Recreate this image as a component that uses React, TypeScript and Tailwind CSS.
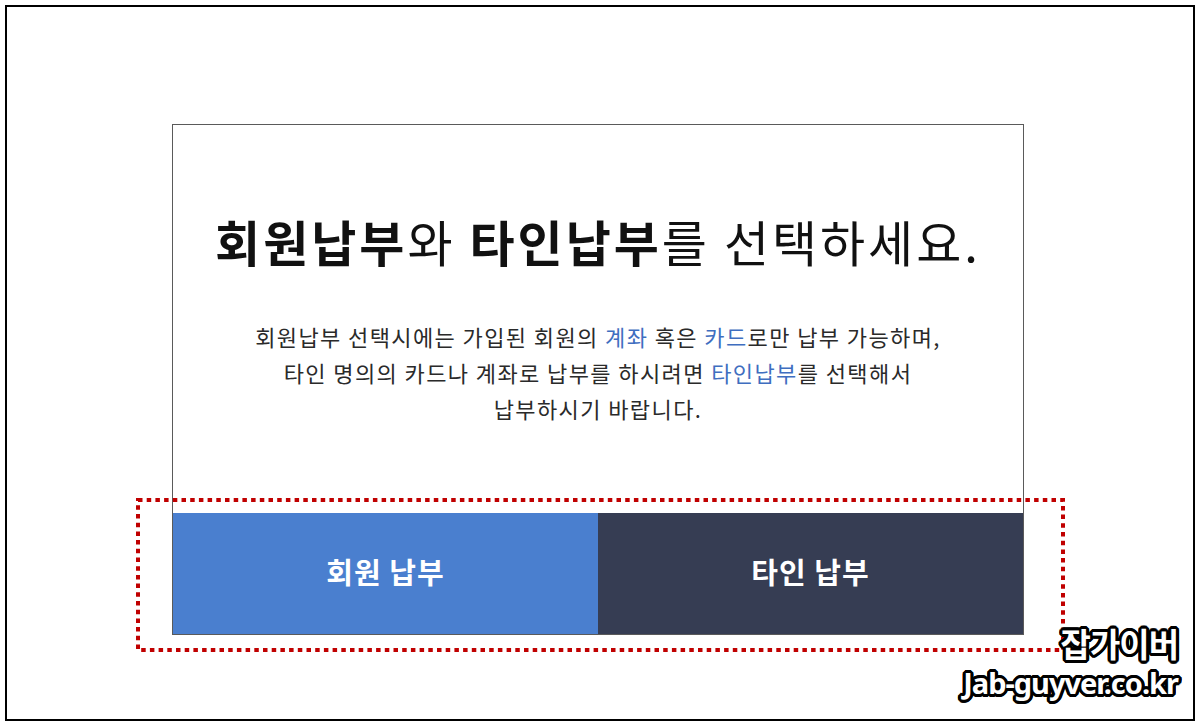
import React from "react";

const KR = "font-['Noto_Sans_CJK_KR','Noto_Sans',sans-serif]";

export default function App() {
  const outline =
    "[text-shadow:3px_0_0_#000,-3px_0_0_#000,0_3px_0_#000,0_-3px_0_#000,2px_2px_0_#000,-2px_2px_0_#000,2px_-2px_0_#000,-2px_-2px_0_#000,3px_1px_0_#000,-3px_1px_0_#000,3px_-1px_0_#000,-3px_-1px_0_#000,1px_3px_0_#000,-1px_3px_0_#000,1px_-3px_0_#000,-1px_-3px_0_#000]";
  return (
    <div className={`relative w-[1200px] h-[726px] bg-white p-[5px] ${KR}`}>
      <div className="h-[716px] border-2 border-black pt-[117px]">
        <div className="ml-[165px] w-[852px] h-[511px] border border-[#5a5a5a] flex flex-col bg-white">
          <div className="h-[388px] pt-[85px] flex flex-col items-center">
            <h1 className="text-[49px] leading-[62px] text-[#111] tracking-[3px] whitespace-nowrap">
              <span className="font-bold">회원납부</span>와{" "}
              <span className="font-bold">타인납부</span>를 선택하세요.
            </h1>
            <p className="mt-[46px] text-[22px] leading-[36px] text-[#2a2a2a] text-center tracking-[1.4px]">
              회원납부 선택시에는 가입된 회원의 <span className="text-[#3f6ec0]">계좌</span> 혹은{" "}
              <span className="text-[#3f6ec0]">카드</span>로만 납부 가능하며,
              <br />
              타인 명의의 카드나 계좌로 납부를 하시려면{" "}
              <span className="text-[#3f6ec0]">타인납부</span>를 선택해서
              <br />
              납부하시기 바랍니다.
            </p>
          </div>
          <div className="flex h-[121px]">
            <button className="flex-1 bg-[#4a7fcf] text-white font-bold text-[29px] tracking-[1px] flex items-center justify-center pb-[3px]">
              회원 납부
            </button>
            <button className="flex-1 bg-[#363d53] text-white font-bold text-[29px] tracking-[1px] flex items-center justify-center pb-[3px]">
              타인 납부
            </button>
          </div>
        </div>
      </div>

      <svg
        className="absolute left-[135px] top-[497px]"
        width="931"
        height="156"
        viewBox="0 0 931 156"
      >
        <rect
          x="3"
          y="3"
          width="925"
          height="150"
          fill="none"
          stroke="#c00000"
          strokeWidth="4"
          strokeDasharray="4.5 4.2"
        />
      </svg>

      <div className="absolute right-[22px] top-[622px] flex flex-col items-end text-white font-bold">
        <div className={`text-[33px] leading-[42px] tracking-[-1px] ${outline}`}>잡가이버</div>
        <div className={`text-[29px] leading-[38px] tracking-[-1px] font-['Noto_Sans',sans-serif] ${outline}`}>
          Jab-guyver.co.kr
        </div>
      </div>
    </div>
  );
}
